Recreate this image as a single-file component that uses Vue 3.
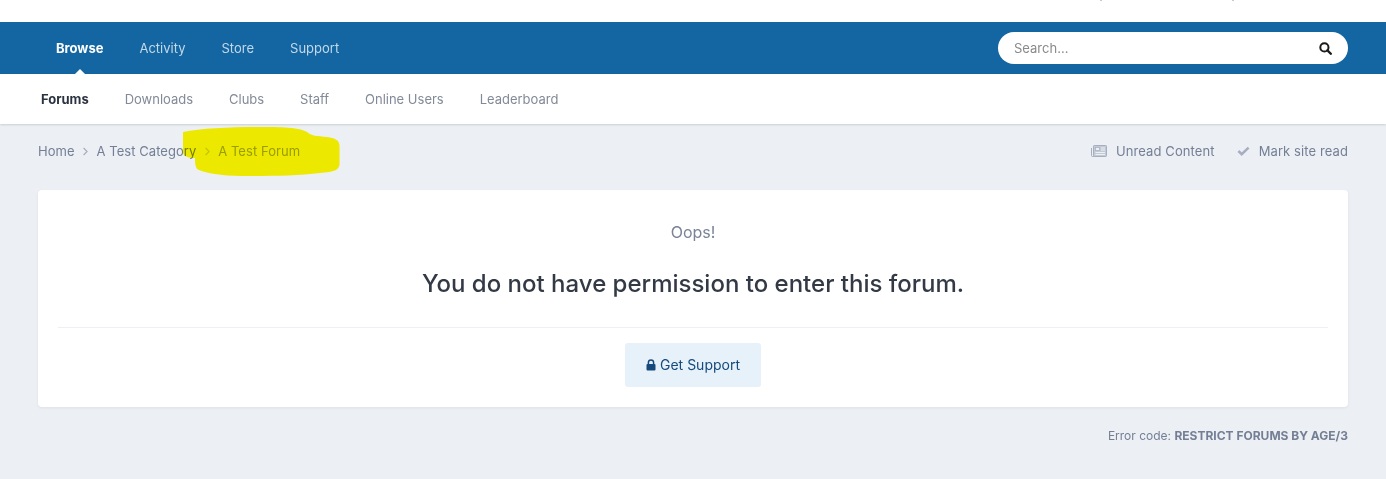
<script setup>
const primary = [
  { label: 'Browse', active: true },
  { label: 'Activity' },
  { label: 'Store' },
  { label: 'Support' }
]
const secondary = ['Downloads', 'Clubs', 'Staff', 'Online Users', 'Leaderboard']
</script>

<template>
  <div class="page">
    <div class="topstrip">
      <i class="tick tick-a"></i>
      <i class="tick tick-b"></i>
    </div>

    <header class="bar">
      <nav class="primary">
        <a v-for="item in primary" :key="item.label" :class="['pitem', { active: item.active }]">{{ item.label }}</a>
      </nav>
      <div class="search">
        <span class="placeholder">Search...</span>
        <svg class="search-icon" width="13" height="13" viewBox="0 0 13 13" aria-hidden="true">
          <circle cx="5.4" cy="5.4" r="4.1" fill="none" stroke="#1b1b1b" stroke-width="2" />
          <path d="M8.4 8.4 L11.8 11.8" stroke="#1b1b1b" stroke-width="2.3" stroke-linecap="round" />
        </svg>
      </div>
    </header>

    <nav class="subnav">
      <a class="sitem current">Forums</a>
      <a v-for="s in secondary" :key="s" class="sitem">{{ s }}</a>
    </nav>

    <main class="content">
      <div class="crumbs">
        <div class="crumb-list">
          <span>Home</span>
          <svg class="chev" width="5" height="9" viewBox="0 0 5 9"><path d="M0.6 1 L4.1 4.5 L0.6 8" fill="none" stroke="#a4adbd" stroke-width="1.1" /></svg>
          <span>A Test Category</span>
          <svg class="chev" width="5" height="9" viewBox="0 0 5 9"><path d="M0.6 1 L4.1 4.5 L0.6 8" fill="none" stroke="#c3cad6" stroke-width="1.1" /></svg>
          <span class="forum">A Test Forum</span>
        </div>
        <div class="crumb-actions">
          <span class="action">
            <svg class="act-icon" width="16" height="12" viewBox="0 0 16 12">
              <rect x="2.5" y="0.5" width="13" height="11" rx="0.8" fill="#c3cad6" stroke="#a6afbf" />
              <path d="M0.5 3 V10.5 a1 1 0 0 0 1 1 H3" fill="none" stroke="#a6afbf" />
              <rect x="4.5" y="2.5" width="4" height="3" fill="#eceff4" stroke="#a6afbf" stroke-width="0.7" />
              <path d="M10 3h4M10 5h4M4.5 7.5h9.5M4.5 9.5h9.5" stroke="#eceff4" stroke-width="1" />
            </svg>
            Unread Content
          </span>
          <span class="action">
            <svg class="act-icon" width="13" height="10" viewBox="0 0 13 10">
              <path d="M1.4 5 L4.7 8.2 L11.6 1.6" fill="none" stroke="#a6afbf" stroke-width="2.5" />
            </svg>
            Mark site read
          </span>
        </div>
      </div>

      <section class="card">
        <p class="oops">Oops!</p>
        <h1 class="message">You do not have permission to enter this forum.</h1>
        <div class="divider"></div>
        <div class="actions">
          <a class="support">
            <svg width="10" height="12" viewBox="0 0 10 12" aria-hidden="true">
              <path d="M2.4 5.5 V3.5 a2.6 2.6 0 0 1 5.2 0 V5.5" fill="none" stroke="#144a7c" stroke-width="1.5" />
              <rect x="0.5" y="5" width="9" height="6.6" rx="1" fill="#144a7c" />
            </svg>
            Get Support
          </a>
        </div>
      </section>

      <p class="error">Error code: <strong>RESTRICT FORUMS BY AGE/3</strong></p>
    </main>

    <svg class="scribble" width="160" height="52" viewBox="0 0 160 52" aria-hidden="true">
      <path d="M1 6 C20 2 50 1 80 1 C105 1 118 2 125 6 C129 10 135 10 145 11 C153 12 157.500 14 157.500 20 L157.500 38 C157.500 44 152 46 138 47 C115 50 85 50 60 50 C40 50 22 47 15 43 C13 40 13 36 13 32 C6 32 1 30 1 26 Z" fill="#fff800" />
    </svg>
  </div>
</template>

<style>
html, body { margin: 0; background: #eceff4; }
</style>

<style scoped>
.page {
  position: relative;
  height: 479px;
  overflow: hidden;
  background: #eceff4;
  font-family: Inter, "Liberation Sans", sans-serif;
  font-size: 13px;
  color: #6f7a90;
}
.topstrip { position: relative; height: 22px; background: #fff; }
.tick { position: absolute; top: 0; width: 2px; height: 1px; background: #c9c9c9; }
.tick-a { left: 1100px; }
.tick-b { left: 1232px; }

.bar {
  height: 52px;
  background: #1466a2;
  display: flex;
  align-items: center;
  justify-content: space-between;
  padding: 0 38px 0 56px;
}
.primary { display: flex; gap: 36px; }
.pitem { color: #c3d8e9; line-height: 52px; position: relative; }
.pitem.active { color: #fff; font-weight: 700; }
.pitem.active::after {
  content: "";
  position: absolute;
  left: 50%;
  bottom: 0;
  margin-left: -5px;
  border: 5px solid transparent;
  border-top: 0;
  border-bottom-color: #fff;
}
.search {
  width: 350px;
  height: 32px;
  box-sizing: border-box;
  padding: 0 16px;
  background: #fff;
  border-radius: 16px;
  display: flex;
  align-items: center;
  justify-content: space-between;
}
.placeholder { color: #8a8a8a; }
.search-icon { display: block; }

.subnav {
  height: 50px;
  background: #fff;
  box-shadow: 0 1px 2px rgba(0, 0, 0, 0.14);
  display: flex;
  align-items: center;
  gap: 35.9px;
  padding-left: 41px;
  position: relative;
}
.sitem { color: #828a97; }
.sitem.current { color: #2c3340; font-weight: 700; }

.content { padding: 0 38px; }
.crumbs {
  height: 54px;
  margin-bottom: 12px;
  display: flex;
  align-items: center;
  justify-content: space-between;
}
.crumb-list { display: flex; align-items: center; gap: 8.4px; color: #747f95; letter-spacing: 0.06px; }
.forum { color: #98a2b4; }
.chev { display: block; margin-top: 1px; }
.crumb-actions { display: flex; gap: 22px; letter-spacing: 0.1px; }
.action { display: flex; align-items: center; gap: 9px; color: #747f95; }
.act-icon { display: block; }

.card {
  background: #fff;
  border-radius: 4px;
  box-shadow: 0 1px 3px rgba(60, 70, 90, 0.08);
  height: 217px;
  box-sizing: border-box;
  padding: 32px 20px 0;
  text-align: center;
}
.oops { margin: 0; font-size: 16px; line-height: 20px; color: #7b8497; }
.message {
  margin: 27px 0 0;
  font-size: 24px;
  font-weight: 500;
  line-height: 30px;
  color: #333a45;
}
.divider { height: 1px; background: #eceff4; margin-top: 28px; }
.actions { display: flex; justify-content: center; margin-top: 15px; }
.support {
  width: 136px;
  height: 44px;
  box-sizing: border-box;
  padding-bottom: 1px;
  background: #e7f1f9;
  border-radius: 3px;
  color: #144a7c;
  font-size: 14px;
  display: flex;
  align-items: center;
  justify-content: center;
  gap: 4px;
}
.error {
  margin: 21px 0 0;
  text-align: right;
  font-size: 12px;
  line-height: 15px;
  color: #747f95;
}
.error strong { font-weight: 700; }

.scribble {
  position: absolute;
  left: 182px;
  top: 126px;
  mix-blend-mode: multiply;
}
</style>
